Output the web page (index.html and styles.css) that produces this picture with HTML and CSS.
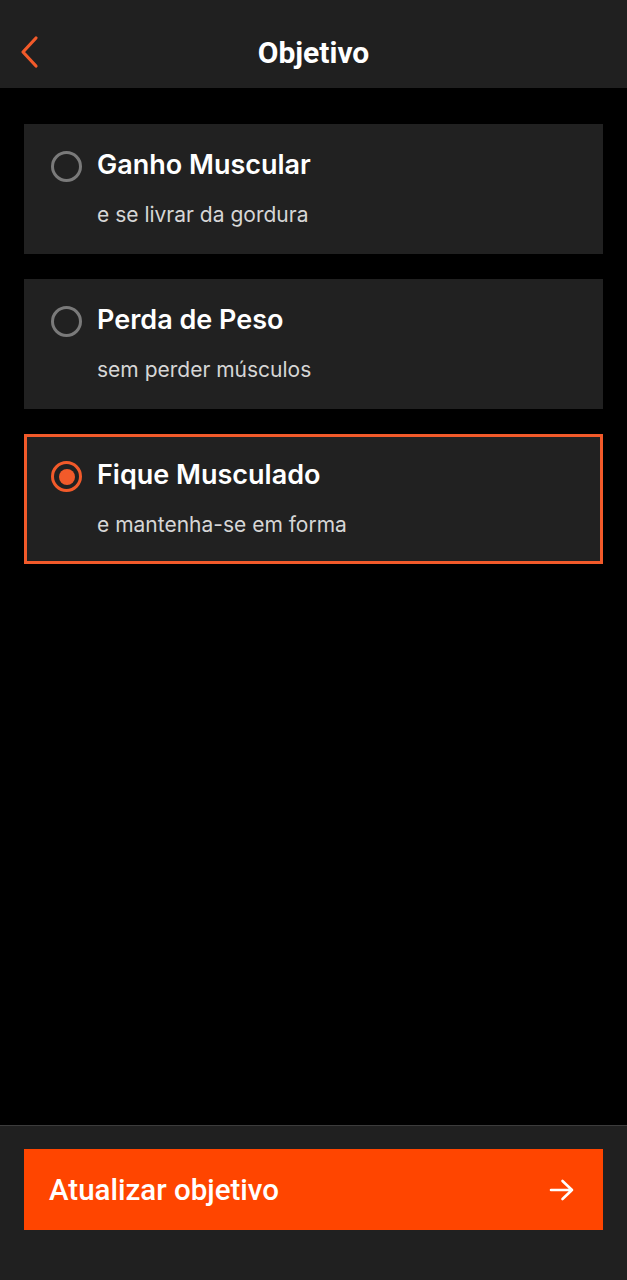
FILE: index.html
```html
<!DOCTYPE html>
<html lang="pt-BR">
<head>
    <meta charset="UTF-8">
    <meta name="viewport" content="width=device-width, initial-scale=1.0">
    <title>Objetivo</title>
    <link rel="stylesheet" href="styles.css">
</head>
<body>

    <div class="page">

        <!-- Barra superior -->
        <header class="topbar">
            <button class="back-btn" aria-label="Voltar">
                <svg width="22" height="34" viewBox="0 0 22 34">
                    <path d="M18 3 L5 17 L18 31" fill="none" stroke="#f25a2a" stroke-width="3.2" stroke-linecap="round" stroke-linejoin="round"/>
                </svg>
            </button>
            <h1 class="topbar-title">Objetivo</h1>
            <span></span>
        </header>

        <!-- Lista de objetivos -->
        <main class="goals">
            <div class="goal">
                <span class="radio"></span>
                <div class="goal-text">
                    <div class="goal-title">Ganho Muscular</div>
                    <div class="goal-sub">e se livrar da gordura</div>
                </div>
            </div>

            <div class="goal">
                <span class="radio"></span>
                <div class="goal-text">
                    <div class="goal-title">Perda de Peso</div>
                    <div class="goal-sub">sem perder músculos</div>
                </div>
            </div>

            <div class="goal selected">
                <span class="radio"></span>
                <div class="goal-text">
                    <div class="goal-title">Fique Musculado</div>
                    <div class="goal-sub">e mantenha-se em forma</div>
                </div>
            </div>
        </main>

        <!-- Rodapé com botão -->
        <footer class="bottombar">
            <button class="update-btn">
                <span>Atualizar objetivo</span>
                <svg width="26" height="22" viewBox="0 0 26 22">
                    <path d="M2 11 H23 M13.5 2 L23 11 L13.5 20" fill="none" stroke="#ffffff" stroke-width="2.6" stroke-linecap="round" stroke-linejoin="round"/>
                </svg>
            </button>
        </footer>

    </div>

</body>
</html>
```

FILE: styles.css
```css
body {
    margin: 0;
    background-color: #000000;
    color: #ffffff;
    font-family: Inter, "Noto Sans", sans-serif;
}

.page {
    display: flex;
    flex-direction: column;
    height: 1280px;
}

.topbar {
    height: 88px;
    box-sizing: border-box;
    padding-top: 16px;
    background-color: #202020;
    display: grid;
    grid-template-columns: 64px 1fr 64px;
    align-items: center;
}

.back-btn {
    background: none;
    border: none;
    padding: 0 0 0 18px;
    display: flex;
    align-items: center;
    cursor: pointer;
}

.topbar-title {
    margin: 0;
    text-align: center;
    font-family: Roboto, sans-serif;
    font-weight: 700;
    font-size: 30px;
}

.goals {
    flex: 1;
    padding: 36px 24px 0;
    display: flex;
    flex-direction: column;
    gap: 25px;
}

.goal {
    height: 130px;
    box-sizing: border-box;
    background-color: #212121;
    border: 3px solid transparent;
    display: flex;
    align-items: flex-start;
    padding: 21px 24px 0;
    gap: 15px;
}

.goal.selected {
    border-color: #f25a2a;
}

.radio {
    width: 31px;
    height: 31px;
    box-sizing: border-box;
    border-radius: 50%;
    border: 3px solid #7a7a7a;
    margin-top: 3px;
    display: flex;
    align-items: center;
    justify-content: center;
}

.goal.selected .radio {
    border-color: #f25a2a;
}

.goal.selected .radio::after {
    content: "";
    width: 16px;
    height: 16px;
    border-radius: 50%;
    background-color: #f25a2a;
}

.goal-title {
    font-size: 27px;
    font-weight: 600;
    line-height: 34px;
}

.goal-sub {
    font-size: 21px;
    color: #d6d6d6;
    margin-top: 20px;
}

.bottombar {
    height: 155px;
    box-sizing: border-box;
    background-color: #202020;
    border-top: 1px solid #3c3c3c;
    padding: 23px 24px 0;
}

.update-btn {
    width: 100%;
    height: 81px;
    background-color: #ff4500;
    border: none;
    color: #ffffff;
    font-family: Roboto, sans-serif;
    font-weight: 500;
    font-size: 29.5px;
    display: flex;
    align-items: center;
    justify-content: space-between;
    padding: 0 28px 0 25px;
    cursor: pointer;
}
```
